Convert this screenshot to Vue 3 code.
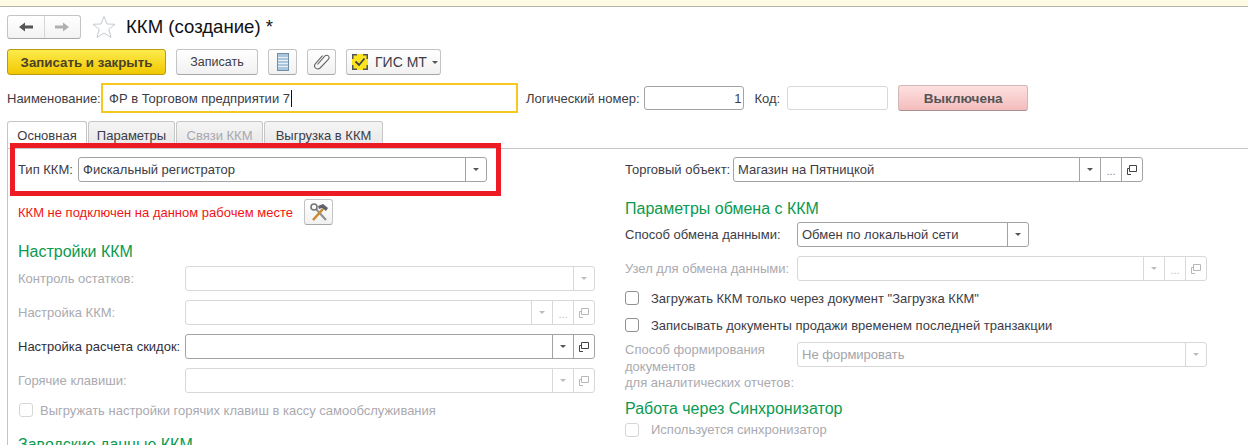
<template>
  <div class="page">
    <div class="top-strip"></div>

    <div class="title-row">
      <div class="nav-group">
        <button class="nav-btn">
          <svg width="16" height="12" viewBox="0 0 16 12"><path d="M1 6 L7 1.5 V4.5 H15 V7.5 H7 V10.5 Z" fill="#555" /></svg>
        </button>
        <button class="nav-btn">
          <svg width="16" height="12" viewBox="0 0 16 12"><path d="M15 6 L9 1.5 V4.5 H1 V7.5 H9 V10.5 Z" fill="#b0b0b0" /></svg>
        </button>
      </div>
      <svg class="star" width="24" height="24" viewBox="0 0 24 24">
        <path d="M12 1.5 L15 9 L23 9.3 L16.8 14.3 L19 22.5 L12 18 L5 22.5 L7.2 14.3 L1 9.3 L9 9 Z" fill="#fff" stroke="#c3cbd3" stroke-width="1" />
      </svg>
      <h1 class="title">ККМ (создание) *</h1>
    </div>

    <div class="command-row">
      <button class="btn btn-main">Записать и закрыть</button>
      <button class="btn btn-save">Записать</button>
      <button class="btn btn-icon">
        <svg width="12" height="18" viewBox="0 0 12 18">
          <rect x="0.5" y="0.5" width="11" height="17" fill="#a9c6dc" stroke="#6f8fa8" />
          <path d="M1 4.5 H11 M1 7.5 H11 M1 10.5 H11 M1 13.5 H11" stroke="#e8f0f6" stroke-width="1" />
        </svg>
      </button>
      <button class="btn btn-icon">
        <svg width="18" height="18" viewBox="0 0 18 18">
          <path d="M5 12.5 L12.2 4.2 C13.4 2.9 15.2 3.1 16 4 C16.8 4.9 16.7 6.4 15.6 7.6 L7.6 16 C6.2 17.3 4 17.2 2.9 16 C1.8 14.8 1.8 13 3 11.6 L10 3.6" fill="none" stroke="#666" stroke-width="1.1" transform="translate(-0.5,-1)" />
        </svg>
      </button>
      <button class="btn btn-gis">
        <svg width="16" height="16" viewBox="0 0 16 16">
          <rect width="16" height="16" fill="#fce51e" />
          <path d="M0.75 5 V0.75 H5 M11 0.75 H15.25 V5 M15.25 11 V15.25 H11 M5 15.25 H0.75 V11" fill="none" stroke="#555" stroke-width="1.5" />
          <path d="M3.5 7.5 L7 11 L12.5 4.5" fill="none" stroke="#444" stroke-width="1.8" />
        </svg>
        <span>ГИС МТ</span>
        <i class="caret"></i>
      </button>
    </div>

    <div class="name-row">
      <label class="label name-label">Наименование:</label>
      <div class="name-input">ФР в Торговом предприятии 7<i class="cursor"></i></div>
      <label class="label logic-label">Логический номер:</label>
      <div class="field logic-input">1</div>
      <label class="label code-label">Код:</label>
      <div class="field code-input disabled"></div>
      <button class="btn btn-off">Выключена</button>
    </div>

    <div class="tabs">
      <div class="tab active">Основная</div>
      <div class="tab">Параметры</div>
      <div class="tab muted">Связи ККМ</div>
      <div class="tab">Выгрузка в ККМ</div>
    </div>

    <div class="panel">
      <div class="col left-col">
        <div class="form-row type-row">
          <label class="label type-label">Тип ККМ:</label>
          <div class="field combo type-combo">
            <span class="value">Фискальный регистратор</span>
            <span class="part"><i class="caret small"></i></span>
          </div>
        </div>

        <div class="warn-row">
          <span class="warn">ККМ не подключен на данном рабочем месте</span>
          <button class="btn btn-tools">
            <svg width="22" height="22" viewBox="0 0 22 22">
              <path d="M18 19 L8 8" stroke="#8d9299" stroke-width="2.2" />
              <path d="M5 19 L15 8" stroke="#c98a2b" stroke-width="2.6" />
              <path d="M10 5 L15 3 L20 7 L18 10 L14 7 L11 8 Z" fill="#5f6368" />
              <circle cx="6" cy="6" r="3" fill="none" stroke="#777" stroke-width="1.6" />
            </svg>
          </button>
        </div>

        <h2 class="heading settings-heading">Настройки ККМ</h2>
        <div v-for="row in leftRows" :key="row.label" class="form-row left-row">
          <label class="label left-label" :class="{ dim: row.off }">{{ row.label }}</label>
          <div class="field combo wide" :class="{ disabled: row.off }">
            <span class="value"></span>
            <span v-for="p in row.parts" :key="p" class="part">
              <i v-if="p === 'caret'" class="caret small"></i>
              <span v-else-if="p === 'dots'" class="dots">...</span>
              <svg v-else width="10" height="10" viewBox="0 0 10 10">
                <path d="M2.5 0.5 H9.5 V6.5 H2.5 Z M2.5 3.5 H0.5 V9.5 H4" fill="none" stroke="currentColor" />
              </svg>
            </span>
          </div>
        </div>
        <label class="check-row self-service dim">
          <i class="check disabled"></i>
          Выгружать настройки горячих клавиш в кассу самообслуживания
        </label>
        <h2 class="heading factory-heading">Заводские данные ККМ</h2>
      </div>

      <div class="col right-col">
        <div class="form-row">
          <label class="label shop-label">Торговый объект:</label>
          <div class="field combo wide">
            <span class="value">Магазин на Пятницкой</span>
            <span class="part"><i class="caret small"></i></span>
            <span class="part"><span class="dots">...</span></span>
            <span class="part">
              <svg width="10" height="10" viewBox="0 0 10 10">
                <path d="M2.5 0.5 H9.5 V6.5 H2.5 Z M2.5 3.5 H0.5 V9.5 H4" fill="none" stroke="currentColor" />
              </svg>
            </span>
          </div>
        </div>

        <h2 class="heading exchange-heading">Параметры обмена с ККМ</h2>
        <div class="form-row exchange-row">
          <label class="label right-label">Способ обмена данными:</label>
          <div class="field combo exchange-combo">
            <span class="value">Обмен по локальной сети</span>
            <span class="part"><i class="caret small"></i></span>
          </div>
        </div>
        <div class="form-row node-row">
          <label class="label right-label dim">Узел для обмена данными:</label>
          <div class="field combo wide disabled">
            <span class="value"></span>
            <span class="part"><i class="caret small"></i></span>
            <span class="part"><span class="dots">...</span></span>
            <span class="part">
              <svg width="10" height="10" viewBox="0 0 10 10">
                <path d="M2.5 0.5 H9.5 V6.5 H2.5 Z M2.5 3.5 H0.5 V9.5 H4" fill="none" stroke="currentColor" />
              </svg>
            </span>
          </div>
        </div>

        <label class="check-row first-check"><i class="check"></i>Загружать ККМ только через документ "Загрузка ККМ"</label>
        <label class="check-row second-check"><i class="check"></i>Записывать документы продажи временем последней транзакции</label>

        <div class="form-row report-row">
          <label class="label right-label dim multi">Способ формирования<br />документов<br />для аналитических отчетов:</label>
          <div class="field combo wide disabled">
            <span class="value">Не формировать</span>
            <span class="part"><i class="caret small"></i></span>
          </div>
        </div>

        <h2 class="heading sync-heading">Работа через Синхронизатор</h2>
        <label class="check-row sync-check dim"><i class="check disabled"></i>Используется синхронизатор</label>
      </div>

      <div class="red-frame"></div>
    </div>
  </div>
</template>

<script setup>
const leftRows = [
  { label: 'Контроль остатков:', off: true, parts: ['caret'] },
  { label: 'Настройка ККМ:', off: true, parts: ['caret', 'dots', 'open'] },
  { label: 'Настройка расчета скидок:', off: false, parts: ['caret', 'open'] },
  { label: 'Горячие клавиши:', off: true, parts: ['caret', 'open'] }
]
</script>

<style>
html,
body {
  margin: 0;
  background: #fff;
  overflow: hidden;
}
</style>

<style scoped>
.page {
  width: 1248px;
  height: 445px;
  overflow: hidden;
  font-family: "Liberation Sans", Arial, sans-serif;
  font-size: 13px;
  color: #3c3c46;
  background: #fff;
}

.top-strip {
  height: 6px;
  background: #fdfbe4;
  border-bottom: 1px solid #b4b4aa;
}

.title-row {
  display: flex;
  align-items: center;
  height: 24px;
  margin: 8px 0 0 7px;
}

.nav-group {
  display: flex;
  width: 74px;
  height: 24px;
  box-sizing: border-box;
  border: 1px solid #c4c4c4;
  border-bottom-color: #a8a8a8;
  border-radius: 3px;
  background: linear-gradient(#fff, #f3f3f3);
}

.nav-btn {
  flex: 1;
  display: flex;
  align-items: center;
  justify-content: center;
  padding: 0;
  border: 0;
  background: none;
}

.nav-btn + .nav-btn {
  border-left: 1px solid #d6d6d6;
}

.star {
  margin-left: 11px;
}

.title {
  margin: 0 0 0 10px;
  font-size: 18.6px;
  font-weight: 400;
  color: #111;
}

.command-row {
  display: flex;
  gap: 10px;
  height: 26px;
  margin: 10px 0 0 7px;
}

.btn {
  box-sizing: border-box;
  display: flex;
  align-items: center;
  justify-content: center;
  padding: 0;
  border: 1px solid #c4c4c4;
  border-bottom-color: #a6a6a6;
  border-radius: 3px;
  background: linear-gradient(#fff, #f1f1f1);
  font: inherit;
  color: #3c3c46;
}

.btn-main {
  width: 159px;
  border-color: #b89b10;
  background: linear-gradient(#fdeb4d, #f0c800);
  font-size: 13.3px;
  font-weight: 700;
  color: #4a4326;
}

.btn-save {
  width: 82px;
  font-size: 12.5px;
}

.btn-icon {
  width: 29px;
}

.btn-gis {
  width: 95px;
  justify-content: flex-start;
  gap: 7px;
  padding-left: 5px;
  font-size: 14px;
}

.btn-gis .caret {
  margin-left: -2px;
}

.caret {
  width: 0;
  height: 0;
  border: 3.5px solid transparent;
  border-top: 3.5px solid #555;
  border-bottom: 0;
}

.caret.small {
  border-width: 3px;
  border-bottom: 0;
}

.disabled .caret {
  border-top-color: #bcbcbc;
}

.name-row {
  display: flex;
  align-items: center;
  height: 30px;
  margin: 8px 0 0 7px;
}

.label {
  white-space: nowrap;
}

.name-label {
  width: 94px;
}

.name-input {
  box-sizing: border-box;
  display: flex;
  align-items: center;
  width: 417px;
  height: 30px;
  padding-left: 6px;
  border: 2px solid #f7c81e;
}

.cursor {
  width: 1px;
  height: 17px;
  background: #111;
  margin-left: 1px;
}

.logic-label {
  margin-left: 8px;
}

.field {
  box-sizing: border-box;
  display: flex;
  height: 25px;
  border: 1px solid #a3a3a3;
  border-radius: 3px;
  background: #fff;
}

.logic-input {
  width: 100px;
  height: 24px;
  margin-left: 4px;
  justify-content: flex-end;
  align-items: center;
  padding-right: 1px;
}

.code-label {
  margin-left: 11px;
}

.code-input {
  width: 101px;
  height: 24px;
  margin-left: 7px;
}

.field.disabled {
  border-color: #d8d8d8;
  color: #a4a4aa;
}

.btn-off {
  width: 130px;
  height: 26px;
  margin-left: 10px;
  border-color: #d0b8b8;
  border-bottom-color: #a89090;
  background: linear-gradient(#fde0e0, #f4bcbc);
  font-size: 13.5px;
  font-weight: 700;
  color: #555;
}

.tabs {
  display: flex;
  height: 27px;
  margin: 8px 0 0 7px;
}

.tab {
  box-sizing: border-box;
  display: flex;
  align-items: center;
  justify-content: center;
  height: 27px;
  margin-right: 1px;
  border: 1px solid #c6c6c6;
  border-bottom: 0;
  border-radius: 3px 3px 0 0;
  background: linear-gradient(#f5f5f5, #e6e6e6);
}

.tab:nth-child(1) {
  width: 80px;
  background: #fff;
}

.tab:nth-child(2),
.tab:nth-child(3) {
  width: 87px;
}

.tab:nth-child(4) {
  width: 119px;
}

.tab.muted {
  color: #a8a8ae;
}

.panel {
  position: relative;
  display: grid;
  grid-template-columns: 617px 1fr;
  height: 300px;
  margin-left: 7px;
  border-top: 1px solid #c6c6c6;
  border-left: 1px solid #c6c6c6;
}

.col {
  padding-top: 8px;
}

.left-col {
  padding-left: 10px;
}

.form-row {
  display: flex;
  align-items: center;
}

.type-label {
  width: 60px;
}

.type-combo {
  width: 409px;
}

.combo .value {
  flex: 1;
  padding-left: 4px;
  line-height: 23px;
  white-space: nowrap;
  overflow: hidden;
}

.part {
  flex: none;
  display: flex;
  align-items: center;
  justify-content: center;
  width: 20px;
  border-left: 1px solid #a3a3a3;
  color: #444;
}

.disabled .part {
  border-left-color: #d8d8d8;
  color: #b8b8b8;
}

.dots {
  font-size: 11px;
  line-height: 12px;
  padding-top: 3px;
  color: #888;
}

.disabled .dots {
  color: #bcbcbc;
}

.warn-row {
  display: flex;
  align-items: center;
  height: 26px;
  margin-top: 17px;
}

.warn {
  width: 286px;
  color: #f01414;
}

.btn-tools {
  width: 29px;
  height: 26px;
}

.heading {
  margin: 0;
  font-size: 16px;
  line-height: 18px;
  font-weight: 400;
  color: #0b9a50;
}

.settings-heading {
  margin-top: 18px;
}

.left-row {
  margin-top: 9px;
}

.settings-heading + .left-row {
  margin-top: 5px;
}

.left-label {
  width: 167px;
  color: #2f2f3a;
}

.left-label.dim,
.dim {
  color: #aaaab0;
}

.wide {
  width: 410px;
}

.check-row {
  display: flex;
  align-items: center;
  gap: 12px;
  height: 16px;
}

.check {
  flex: none;
  box-sizing: border-box;
  width: 14px;
  height: 14px;
  border: 1px solid #909090;
  border-radius: 3px;
  background: #fff;
}

.check.disabled {
  border-color: #d6d6d6;
}

.self-service {
  margin: 9px 0 0 1px;
  gap: 7px;
}

.factory-heading {
  margin-top: 18px;
}

.shop-label {
  width: 108px;
}

.exchange-heading {
  margin-top: 18px;
}

.right-label {
  width: 172px;
}

.exchange-row {
  margin-top: 4px;
}

.exchange-combo {
  width: 232px;
}

.node-row {
  margin-top: 9px;
}

.first-check {
  margin-top: 9px;
}

.second-check {
  margin-top: 11px;
}

.report-row {
  align-items: flex-start;
  margin-top: 9px;
}

.multi {
  line-height: 16.5px;
}

.sync-heading {
  margin-top: 8px;
}

.sync-check {
  margin-top: 4px;
}

.red-frame {
  position: absolute;
  left: 2px;
  top: -6px;
  width: 491px;
  height: 53px;
  box-sizing: border-box;
  border: 5px solid #ed1c24;
  pointer-events: none;
}
</style>
